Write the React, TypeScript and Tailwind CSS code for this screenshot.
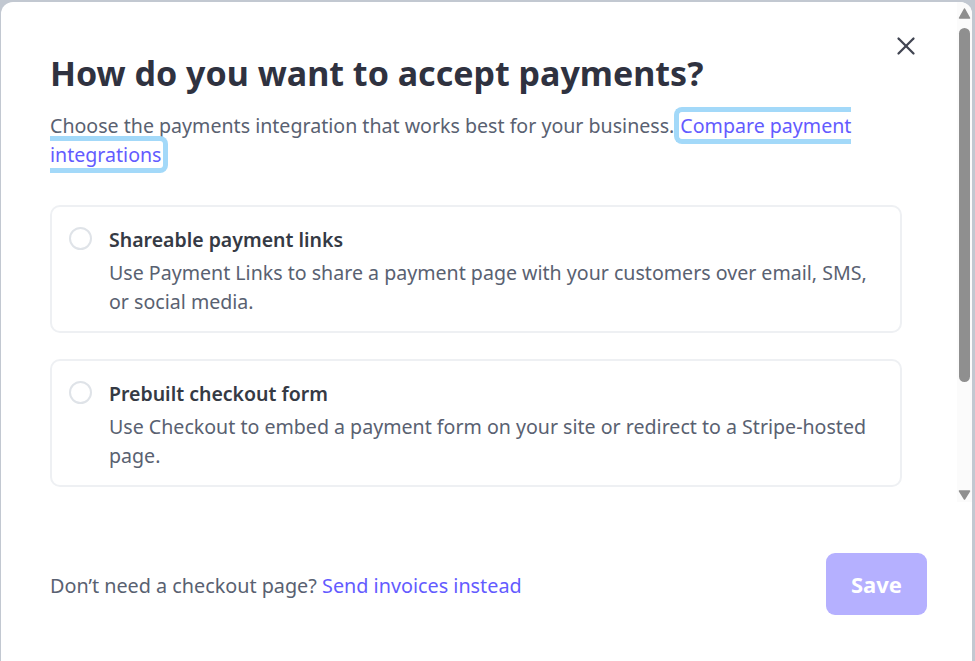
import { X } from 'lucide-react';

const options = [
    {
        id: 'links',
        title: 'Shareable payment links',
        description:
            'Use Payment Links to share a payment page with your customers over email, SMS, or social media.',
    },
    {
        id: 'checkout',
        title: 'Prebuilt checkout form',
        description:
            'Use Checkout to embed a payment form on your site or redirect to a Stripe-hosted page.',
    },
    {
        id: 'elements',
        title: 'Custom payment flow',
        description:
            'Use Elements to build a fully customised payment form directly into your site.',
    },
];

function OptionCard({ title, description }: { title: string; description: string }) {
    return (
        <label className="flex gap-[17px] rounded-[10px] border-2 border-[#eef0f3] px-[17px] pt-[20px] pb-[15px]">
            <span className="h-[23px] w-[23px] shrink-0 rounded-full border-2 border-[#dfe3e8] bg-white" />
            <span className="flex flex-col">
                <span className="text-[19.5px] leading-[26px] font-semibold text-[#353a44]">
                    {title}
                </span>
                <span className="mt-[5px] text-[19.6px] leading-[29px] text-[#596171]">
                    {description}
                </span>
            </span>
        </label>
    );
}

function Scrollbar() {
    return (
        <div className="flex w-[15px] shrink-0 flex-col items-center bg-[#fbfbfb]">
            <svg width="13" height="20" viewBox="0 0 13 20" className="shrink-0">
                <path d="M6.5 7 L11.5 16 L1.5 16 Z" fill="#8f8f8f" strokeLinejoin="round" stroke="#8f8f8f" strokeWidth="1.5" />
            </svg>
            <div className="flex-1 pt-[6px]">
                <div className="h-[354px] w-[11px] rounded-full bg-[#8f8f8f]" />
            </div>
            <svg width="13" height="20" viewBox="0 0 13 20" className="shrink-0">
                <path d="M1.5 9 L11.5 9 L6.5 17 Z" fill="#8f8f8f" strokeLinejoin="round" stroke="#8f8f8f" strokeWidth="1.5" />
            </svg>
        </div>
    );
}

export default function App() {
    return (
        <div
            className="h-[661px] w-[975px] overflow-hidden bg-[#c2c8d1] pt-[2px] pl-[1px]"
            style={{ fontFamily: '"Noto Sans", "Open Sans", sans-serif' }}
        >
            <div className="flex h-[670px] w-[971px] flex-col overflow-hidden rounded-[12px] bg-white">
                <div className="flex h-[500px] shrink-0">
                    <div className="relative flex-1 overflow-hidden pr-[55px] pl-[49px]">
                        <button
                            type="button"
                            className="absolute top-[29px] right-[36px] text-[#414552]"
                        >
                            <X size={30} strokeWidth={1.8} />
                        </button>
                        <h1 className="pt-[49px] text-[34px] leading-[44px] font-bold text-[#2f3240]">
                            How do you want to accept payments?
                        </h1>
                        <p className="mt-[16px] text-[19.6px] leading-[29px] text-[#596171]">
                            Choose the payments integration that works best for your business.
                            <a
                                href="#"
                                className="rounded-[8px] border-[5px] border-[#a3d9f9] px-[1px] py-0 text-[#635bff]"
                            >
                                Compare payment integrations
                            </a>
                        </p>
                        <div className="mt-[36px] flex flex-col gap-[26px] pb-[24px]">
                            {options.map((option) => (
                                <OptionCard
                                    key={option.id}
                                    title={option.title}
                                    description={option.description}
                                />
                            ))}
                        </div>
                    </div>
                    <Scrollbar />
                </div>
                <div className="flex items-center justify-between pt-[51px] pr-[45px] pl-[49px]">
                    <p className="pt-[3px] text-[19.8px] leading-[28px] text-[#596171]">
                        Don’t need a checkout page?{' '}
                        <a href="#" className="text-[#635bff]">
                            Send invoices instead
                        </a>
                    </p>
                    <button
                        type="button"
                        disabled
                        className="h-[62px] w-[101px] rounded-[9px] bg-[#b5b0ff] text-[22px] font-bold text-white"
                    >
                        Save
                    </button>
                </div>
            </div>
        </div>
    );
}
